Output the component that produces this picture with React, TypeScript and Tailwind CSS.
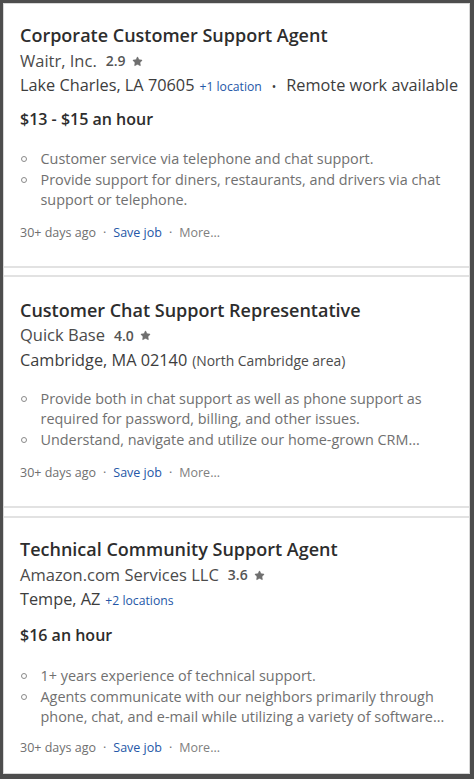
import { Star } from 'lucide-react';

type Job = {
  title: string;
  company: string;
  rating: string;
  location: string;
  extra?: { text: string; kind: 'link' | 'note' };
  remote?: boolean;
  salary?: string;
  bullets: string[];
};

const jobs: Job[] = [
  {
    title: 'Corporate Customer Support Agent',
    company: 'Waitr, Inc.',
    rating: '2.9',
    location: 'Lake Charles, LA 70605',
    extra: { text: '+1 location', kind: 'link' },
    remote: true,
    salary: '$13 - $15 an hour',
    bullets: [
      'Customer service via telephone and chat support.',
      'Provide support for diners, restaurants, and drivers via chat support or telephone.',
    ],
  },
  {
    title: 'Customer Chat Support Representative',
    company: 'Quick Base',
    rating: '4.0',
    location: 'Cambridge, MA 02140',
    extra: { text: '(North Cambridge area)', kind: 'note' },
    bullets: [
      'Provide both in chat support as well as phone support as required for password, billing, and other issues.',
      'Understand, navigate and utilize our home-grown CRM...',
    ],
  },
  {
    title: 'Technical Community Support Agent',
    company: 'Amazon.com Services LLC',
    rating: '3.6',
    location: 'Tempe, AZ',
    extra: { text: '+2 locations', kind: 'link' },
    salary: '$16 an hour',
    bullets: [
      '1+ years experience of technical support.',
      'Agents communicate with our neighbors primarily through phone, chat, and e-mail while utilizing a variety of software...',
    ],
  },
];

// per-card spacing tweaks
const cardStyles = [
  'pt-[19px] pb-[22px] border-b-2 border-[#e2e2e2]',
  'mt-[7px] pt-[21px] pb-[23px] border-y-2 border-[#e2e2e2]',
  'mt-[8px] pt-[19px] border-t-2 border-[#e2e2e2]',
];
const salaryGap = ['mt-[10px]', 'mt-[10px]', 'mt-[12px]'];
const bulletGap = ['mt-[18px]', 'mt-[17px]', 'mt-[19px]'];
const footerGap = ['mt-[13px]', 'mt-[13px]', 'mt-[11px]'];

function JobCard({ job, index }: { job: Job; index: number }) {
  return (
    <div className={'bg-white pl-[16px] pr-[14px] ' + cardStyles[index]}>
      <h2 className="text-[18px] leading-[24px] font-semibold text-[#2d2d2d]">{job.title}</h2>

      {/* company + rating */}
      <div className="mt-[2px] h-[24px] flex items-center text-[16.5px] leading-none text-[#4b4b4b]">
        <span>{job.company}</span>
        <span className="ml-[9px] text-[14px] font-semibold text-[#555]">{job.rating}</span>
        <Star className="ml-[6px] w-[11px] h-[11px] fill-[#6f6f6f] text-[#6f6f6f]" strokeWidth={1} />
      </div>

      {/* location */}
      <div className="h-[24px] leading-[24px] text-[16.3px] text-[#3d3d3d] whitespace-nowrap">
        <span>{job.location}</span>
        {job.extra && job.extra.kind === 'link' && (
          <span className="ml-[5px] text-[12.2px] leading-none text-[#2557a7]">{job.extra.text}</span>
        )}
        {job.extra && job.extra.kind === 'note' && (
          <span className="ml-[5px] text-[13.9px] leading-none text-[#4b4b4b]">{job.extra.text}</span>
        )}
        {job.remote && (
          <>
            <span className="mx-[10px] text-[12px] leading-none">•</span>
            <span>Remote work available</span>
          </>
        )}
      </div>

      {job.salary && (
        <div className={salaryGap[index] + ' text-[16px] leading-[24px] font-semibold text-[#2d2d2d]'}>
          {job.salary}
        </div>
      )}

      <ul className={bulletGap[index] + ' text-[14.4px] leading-[20.5px] text-[#707070]'}>
        {job.bullets.map((b) => (
          <li key={b} className="flex">
            <span className="w-[20.5px] shrink-0 h-[20.5px] flex items-center">
              <span className="ml-[1px] w-[6px] h-[6px] rounded-full border border-[#8a8a8a]" />
            </span>
            <span>{b}</span>
          </li>
        ))}
      </ul>

      <div className={footerGap[index] + ' h-[20px] flex items-center text-[12.5px] leading-none text-[#707070]'}>
        <span>30+ days ago</span>
        <span className="mx-[7px]">·</span>
        <span className="text-[#2557a7]">Save job</span>
        <span className="mx-[7px]">·</span>
        <span className="text-[#808080]">More...</span>
      </div>
    </div>
  );
}

export default function App() {
  return (
    <div
      className="w-[474px] h-[779px] bg-[#4d4d4d] pl-[3px] pt-[3px] pr-[4px] pb-[5px]"
      style={{ fontFamily: '"Open Sans", "Noto Sans", sans-serif' }}
    >
      <div className="h-full bg-white border border-[#d8d8d8] flex flex-col overflow-hidden">
        {jobs.map((job, i) => (
          <JobCard key={job.title} job={job} index={i} />
        ))}
      </div>
    </div>
  );
}
